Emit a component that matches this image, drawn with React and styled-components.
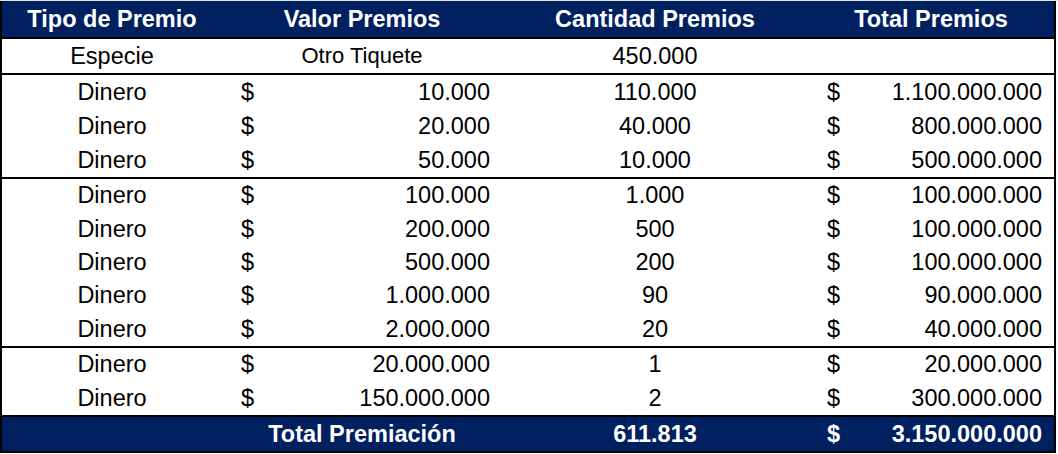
import React from "react";
import styled, { createGlobalStyle } from "styled-components";

const GlobalStyle = createGlobalStyle`
  html, body {
    margin: 0;
    padding: 0;
    background: #fff;
  }
  body {
    font-family: "Liberation Sans", Arial, sans-serif;
  }
`;

const NAVY = "#002060";

const Page = styled.div`
  width: 1058px;
  height: 454px;
  box-sizing: border-box;
  border-top: 1px solid #e4e4e4;
`;

const Table = styled.div`
  width: 1056px;
  box-sizing: border-box;
  border-left: 2px solid #000;
  border-right: 2px solid #000;
  border-bottom: 2px solid #000;
  display: flex;
  flex-direction: column;
`;

const Row = styled.div`
  display: grid;
  grid-template-columns: 220px 280px 306px 246px;
  align-items: center;
  height: ${(p) => p.h || 34}px;
  flex: ${(p) => (p.grow ? 1 : "0 0 auto")};
  background: ${(p) => (p.dark ? NAVY : "#fff")};
  color: ${(p) => (p.dark ? "#fff" : "#000")};
  font-weight: ${(p) => (p.dark ? 700 : 400)};
  font-size: 23.5px;
`;

const Group = styled.div`
  display: flex;
  flex-direction: column;
  box-sizing: border-box;
  height: ${(p) => p.h}px;
  border-top: 2px solid #000;
`;

const Cell = styled.div`
  text-align: center;
  white-space: nowrap;
  font-size: ${(p) => p.size || "inherit"};
`;

const Money = styled.div`
  display: flex;
  justify-content: space-between;
  padding: 0 12px 0 19px;
  white-space: nowrap;
`;

const HeaderRow = styled(Row)`
  height: 36px;
`;

const FooterRow = styled(Row)`
  box-sizing: border-box;
  border-top: 2px solid #000;
  height: 36px;
`;

const groups = [
  {
    h: 104,
    rows: [
      ["10.000", "110.000", "1.100.000.000"],
      ["20.000", "40.000", "800.000.000"],
      ["50.000", "10.000", "500.000.000"],
    ],
  },
  {
    h: 169,
    rows: [
      ["100.000", "1.000", "100.000.000"],
      ["200.000", "500", "100.000.000"],
      ["500.000", "200", "100.000.000"],
      ["1.000.000", "90", "90.000.000"],
      ["2.000.000", "20", "40.000.000"],
    ],
  },
  {
    h: 69,
    rows: [
      ["20.000.000", "1", "20.000.000"],
      ["150.000.000", "2", "300.000.000"],
    ],
  },
];

export default function App() {
  return (
    <>
      <GlobalStyle />
      <Page>
        <Table>
          <HeaderRow dark>
            <Cell>Tipo de Premio</Cell>
            <Cell>Valor Premios</Cell>
            <Cell>Cantidad Premios</Cell>
            <Cell>Total Premios</Cell>
          </HeaderRow>
          <Group h={36}>
            <Row grow>
              <Cell>Especie</Cell>
              <Cell size="22px">Otro Tiquete</Cell>
              <Cell>450.000</Cell>
              <Cell />
            </Row>
          </Group>
          {groups.map((g, gi) => (
            <Group key={gi} h={g.h}>
              {g.rows.map(([valor, cantidad, total], ri) => (
                <Row grow key={ri}>
                  <Cell>Dinero</Cell>
                  <Money>
                    <span>$</span>
                    <span>{valor}</span>
                  </Money>
                  <Cell>{cantidad}</Cell>
                  <Money>
                    <span>$</span>
                    <span>{total}</span>
                  </Money>
                </Row>
              ))}
            </Group>
          ))}
          <FooterRow dark>
            <Cell />
            <Cell>Total Premiación</Cell>
            <Cell>611.813</Cell>
            <Money>
              <span>$</span>
              <span>3.150.000.000</span>
            </Money>
          </FooterRow>
        </Table>
      </Page>
    </>
  );
}
